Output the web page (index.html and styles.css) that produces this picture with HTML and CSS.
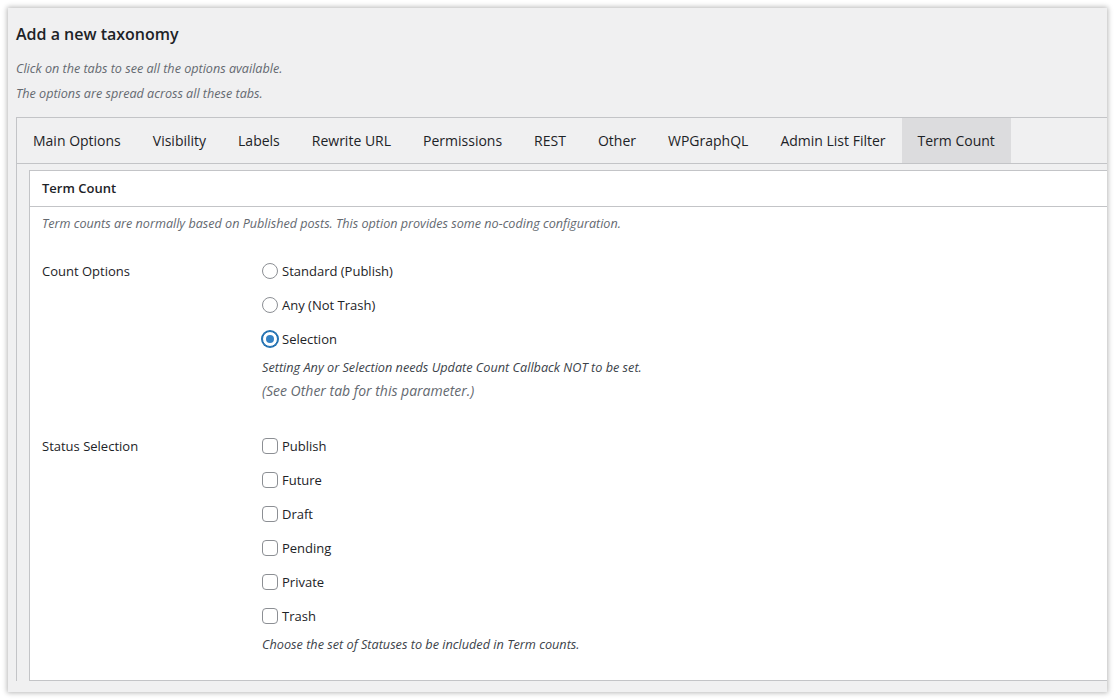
FILE: index.html
```html
<!DOCTYPE html>
<html lang="en">
<head>
<meta charset="utf-8">
<title>Add a new taxonomy</title>
<link rel="stylesheet" href="styles.css">
</head>
<body>
<div class="frame">
  <div class="wrap">
    <h2 class="title">Add a new taxonomy</h2>
    <p class="intro">Click on the tabs to see all the options available.</p>
    <p class="intro">The options are spread across all these tabs.</p>
    <div class="tabs">
      <div class="tabbar">
        <span class="tab">Main Options</span>
        <span class="tab">Visibility</span>
        <span class="tab">Labels</span>
        <span class="tab">Rewrite URL</span>
        <span class="tab">Permissions</span>
        <span class="tab">REST</span>
        <span class="tab">Other</span>
        <span class="tab">WPGraphQL</span>
        <span class="tab">Admin List Filter</span>
        <span class="tab active">Term Count</span>
      </div>
      <div class="panel">
        <div class="box">
          <div class="box-head">Term Count</div>
          <p class="box-desc">Term counts are normally based on Published posts. This option provides some no-coding configuration.</p>
          <div class="row first">
            <div class="label">Count Options</div>
            <div class="controls">
              <label class="opt"><span class="radio"></span>Standard (Publish)</label>
              <label class="opt"><span class="radio"></span>Any (Not Trash)</label>
              <label class="opt"><span class="radio checked"></span>Selection</label>
              <p class="hint">Setting Any or Selection needs Update Count Callback NOT to be set.</p>
              <p class="hint light">(See Other tab for this parameter.)</p>
            </div>
          </div>
          <div class="row second">
            <div class="label">Status Selection</div>
            <div class="controls">
              <label class="opt"><span class="check"></span>Publish</label>
              <label class="opt"><span class="check"></span>Future</label>
              <label class="opt"><span class="check"></span>Draft</label>
              <label class="opt"><span class="check"></span>Pending</label>
              <label class="opt"><span class="check"></span>Private</label>
              <label class="opt"><span class="check"></span>Trash</label>
              <p class="hint">Choose the set of Statuses to be included in Term counts.</p>
            </div>
          </div>
        </div>
      </div>
    </div>
  </div>
</div>
</body>
</html>
```

FILE: styles.css
```css
html, body {
  margin: 0;
  padding: 0;
  background: #ffffff;
}

body {
  font-family: "Open Sans", "Noto Sans", "Liberation Sans", sans-serif;
  color: #1d2327;
}

.frame {
  margin: 8px;
  width: 1099px;
  height: 684px;
  overflow: hidden;
  background: #f0f0f1;
  box-shadow: 0 0 5px 1px rgba(0, 0, 0, 0.28);
}

.wrap {
  padding: 15px 0 0 8px;
}

.title {
  margin: 0;
  font-size: 16px;
  line-height: 22px;
  font-weight: 600;
  color: #1d2327;
}

.intro {
  margin: 0;
  font-size: 12.6px;
  line-height: 20px;
  font-style: italic;
  color: #646970;
}

.title + .intro {
  margin-top: 14px;
}

.intro + .intro {
  margin-top: 5px;
}

.tabs {
  margin-top: 13px;
  width: 1120px;
  border-top: 1px solid #c3c4c7;
  border-left: 1px solid #c3c4c7;
}

.tabbar {
  display: flex;
  height: 45px;
  border-bottom: 1px solid #c3c4c7;
}

.tab {
  display: flex;
  align-items: center;
  padding: 0 16px;
  font-size: 14px;
  color: #1d2327;
}

.tab.active {
  background: #dcdcde;
}

.panel {
  padding: 6px 0 0 12px;
}

.box {
  background: #ffffff;
  border: 1px solid #c3c4c7;
  padding-bottom: 24px;
}

.box-head {
  height: 35px;
  line-height: 35px;
  padding-left: 12px;
  font-size: 13px;
  font-weight: 600;
  border-bottom: 1px solid #c3c4c7;
}

.box-desc {
  margin: 7px 0 0 12px;
  font-size: 12.6px;
  line-height: 20px;
  font-style: italic;
  color: #646970;
}

.row {
  display: grid;
  grid-template-columns: 220px 1fr;
  padding-left: 12px;
}

.row.first {
  margin-top: 20px;
}

.row.second {
  margin-top: 27px;
}

.label {
  font-size: 13px;
  line-height: 34px;
  color: #1d2327;
}

.controls {
  display: flex;
  flex-direction: column;
}

.opt {
  display: flex;
  align-items: center;
  height: 34px;
  font-size: 13px;
  color: #1d2327;
}

.radio,
.check {
  box-sizing: border-box;
  width: 16px;
  height: 16px;
  margin-right: 4px;
  border: 1px solid #8c8f94;
  background: #ffffff;
  flex: none;
}

.radio {
  border-radius: 50%;
  display: flex;
  align-items: center;
  justify-content: center;
}

.radio.checked {
  border-color: #2271b1;
  box-shadow: 0 0 0 1px #2271b1;
}

.radio.checked::after {
  content: "";
  width: 8px;
  height: 8px;
  border-radius: 50%;
  background: #3582c4;
}

.check {
  border-radius: 4px;
}

.hint {
  margin: 0;
  font-size: 12.7px;
  line-height: 23px;
  font-style: italic;
  color: #3c434a;
}

.hint.light {
  color: #646970;
  font-size: 14px;
}
```
